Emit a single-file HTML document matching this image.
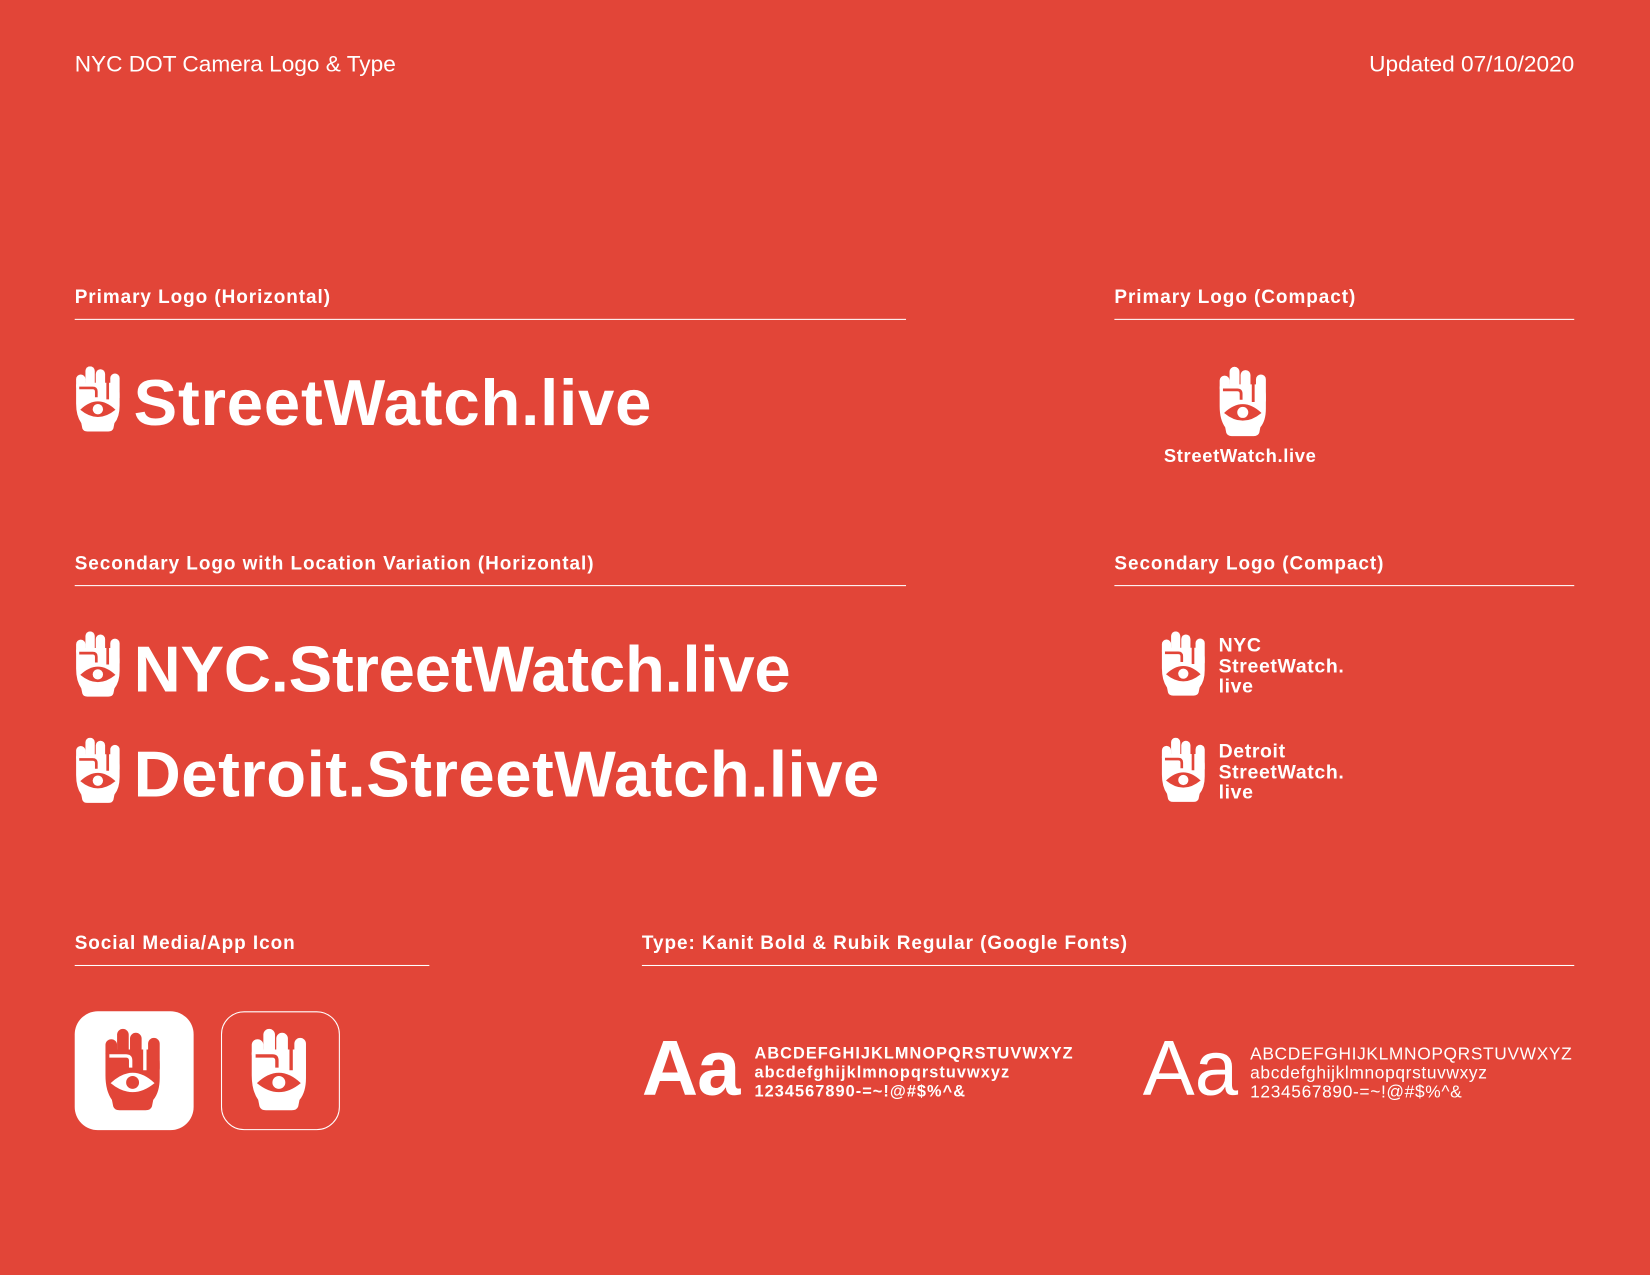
<!DOCTYPE html>
<html><head><meta charset="utf-8"><style>
html,body{margin:0;padding:0;background:#E24538;overflow:hidden}
#w{width:1568px;height:1212px;position:relative;transform:scale(1.05230);transform-origin:0 0;color:#fff;font-family:"Liberation Sans",sans-serif;--f:#fff;--b:#E24538}
.a{position:absolute;white-space:nowrap}
.h{font-weight:bold;font-size:18px;letter-spacing:0.9px}
.l{position:absolute;height:1px;background:#fff}
.k{font-weight:bold;letter-spacing:0.3px}
svg.i{position:absolute}
</style></head><body><div id="w">
<svg width="0" height="0" style="position:absolute"><defs>
<symbol id="fist" viewBox="0 0 44 64">
<rect x="10" y="0" width="9" height="22" rx="4.5" style="fill:var(--f)"/>
<rect x="20" y="3" width="9" height="24" rx="4.5" style="fill:var(--f)"/>
<rect x="34" y="7" width="9" height="28" rx="4.5" style="fill:var(--f)"/>
<rect x="1" y="8" width="9" height="16" rx="4.5" style="fill:var(--f)"/>
<path d="M3 16 L38 16 Q43 18 43 27 L43 38 Q43 49 38 55 L37 60 Q36 63 32 63 L12 63 Q8 63 7 60 L6 55 Q1 48 1 36 L1 19 Q1 16 3 16Z" style="fill:var(--f)"/>
<path d="M4 21 L17 21 Q20.5 21 20.5 24.5 L20.5 30 M31.5 8 L31.5 32" style="stroke:var(--b);fill:none" stroke-width="2.6"/>
<path d="M5 42 Q22 26 39 42 Q22 56 5 42Z" style="fill:var(--b)"/>
<circle cx="22" cy="41.5" r="5" style="fill:var(--f)"/>
</symbol></defs></svg>

<div class="a" style="left:71px;top:49px;font-size:21.5px">NYC DOT Camera Logo &amp; Type</div>
<div class="a" style="right:72px;top:49px;font-size:21.5px">Updated 07/10/2020</div>

<div class="a h" style="left:71px;top:272px">Primary Logo (Horizontal)</div>
<div class="l" style="left:71px;top:303px;width:790px"></div>
<div class="a h" style="left:1059px;top:272px">Primary Logo (Compact)</div>
<div class="l" style="left:1059px;top:303px;width:437px"></div>

<svg class="i" style="left:71px;top:348px" width="44" height="63"><use href="#fist"/></svg>
<div class="a k" style="left:127px;top:348px;font-size:62px;letter-spacing:0.8px">StreetWatch.live</div>

<svg class="i" style="left:1158px;top:348px" width="46" height="68"><use href="#fist"/></svg>
<div class="a" style="left:1106px;top:423px;font-size:17.5px;font-weight:bold;letter-spacing:0.6px">StreetWatch.live</div>

<div class="a h" style="left:71px;top:525px">Secondary Logo with Location Variation (Horizontal)</div>
<div class="l" style="left:71px;top:556px;width:790px"></div>
<div class="a h" style="left:1059px;top:525px">Secondary Logo (Compact)</div>
<div class="l" style="left:1059px;top:556px;width:437px"></div>

<svg class="i" style="left:71px;top:600px" width="44" height="63"><use href="#fist"/></svg>
<div class="a k" style="left:127px;top:601px;font-size:62px;letter-spacing:-0.2px">NYC.StreetWatch.live</div>
<svg class="i" style="left:71px;top:701px" width="44" height="63"><use href="#fist"/></svg>
<div class="a k" style="left:127px;top:701px;font-size:62px;letter-spacing:0.5px">Detroit.StreetWatch.live</div>

<svg class="i" style="left:1103px;top:600px" width="43" height="62"><use href="#fist"/></svg>
<div class="a" style="left:1158px;top:603px;font-size:18.5px;font-weight:bold;line-height:19.5px;letter-spacing:0.6px">NYC<br>StreetWatch.<br>live</div>
<svg class="i" style="left:1103px;top:701px" width="43" height="62"><use href="#fist"/></svg>
<div class="a" style="left:1158px;top:704px;font-size:18.5px;font-weight:bold;line-height:19.5px;letter-spacing:0.6px">Detroit<br>StreetWatch.<br>live</div>

<div class="a h" style="left:71px;top:886px">Social Media/App Icon</div>
<div class="l" style="left:71px;top:917px;width:337px"></div>
<div class="a h" style="left:610px;top:886px">Type: Kanit Bold &amp; Rubik Regular (Google Fonts)</div>
<div class="l" style="left:610px;top:917px;width:886px"></div>

<div class="a" style="left:71px;top:961px;width:113px;height:113px;background:#fff;border-radius:22px"></div>
<svg class="i" style="left:99px;top:974px;--f:#E24538;--b:#fff" width="54" height="86"><use href="#fist"/></svg>
<div class="a" style="left:210px;top:961px;width:111px;height:111px;border:1px solid #fff;border-radius:22px"></div>
<svg class="i" style="left:238px;top:974px" width="54" height="86"><use href="#fist"/></svg>

<div class="a" style="left:610px;top:972px;font-size:74px;font-weight:bold;letter-spacing:-1px">Aa</div>
<div class="a" style="left:717px;top:993px;font-size:15.5px;font-weight:bold;line-height:18px;letter-spacing:1px">ABCDEFGHIJKLMNOPQRSTUVWXYZ<br>abcdefghijklmnopqrstuvwxyz<br>1234567890-=~!@#$%^&amp;</div>
<div class="a" style="left:1086px;top:972px;font-size:74px">Aa</div>
<div class="a" style="left:1188px;top:993px;font-size:16.5px;line-height:18px;letter-spacing:0.6px">ABCDEFGHIJKLMNOPQRSTUVWXYZ<br>abcdefghijklmnopqrstuvwxyz<br>1234567890-=~!@#$%^&amp;</div>
</div>
</body></html>
